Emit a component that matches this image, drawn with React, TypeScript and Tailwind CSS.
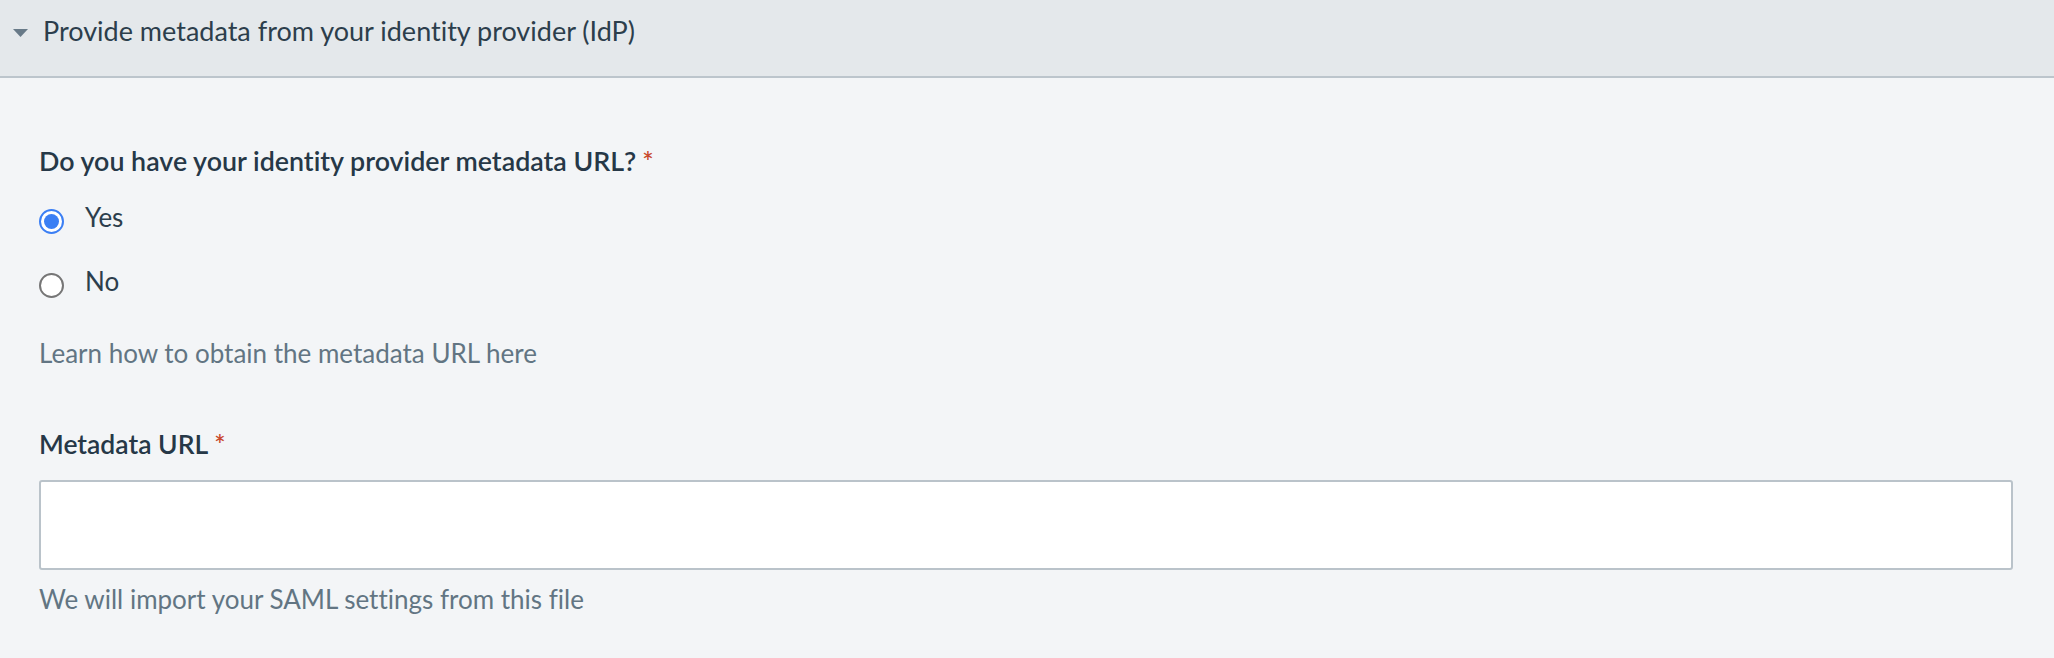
import { useState } from 'react';

const Required = () => <span className="ml-[6px] text-[#c9482c]">*</span>;

const Radio = ({ checked }: { checked: boolean }) =>
  checked ? (
    <span className="mt-[8px] flex h-[25px] w-[25px] shrink-0 items-center justify-center rounded-full border-[2.5px] border-[#3b7ff4] bg-white">
      <span className="h-[15px] w-[15px] rounded-full bg-[#3b7ff4]" />
    </span>
  ) : (
    <span className="mt-[8px] h-[25px] w-[25px] shrink-0 rounded-full border-2 border-[#767676] bg-white" />
  );

const App = () => {
  const [hasUrl, setHasUrl] = useState(true);
  const [url, setUrl] = useState('');

  return (
    <div className="min-h-[658px] w-full bg-[#f3f5f7] font-['Lato',sans-serif] [font-variant-ligatures:none]">
      {/* Collapsible section header */}
      <div className="h-[78px] border-b-2 border-[#bcc5cc] bg-[#e4e8eb] pt-[14px] pl-[13px]">
        <div className="flex h-[34px] items-center gap-[15px]">
          <svg width="15" height="8" viewBox="0 0 15 8" className="mt-[3px]">
            <path d="M0 0 L15 0 L7.5 8 Z" fill="#687a88" />
          </svg>
          <span className="text-[27px] leading-[34px] text-[#2c3e4c]">
            Provide metadata from your identity provider (IdP)
          </span>
        </div>
      </div>

      <div className="pt-[67px] pr-[41px] pl-[39px] text-[26px] leading-[32px]">
        <div className="text-[26.8px] font-semibold text-[#263847]">
          Do you have your identity provider metadata URL?
          <Required />
        </div>

        <div className="mt-[24px] flex flex-col gap-[31px]">
          {[
            { label: 'Yes', value: true },
            { label: 'No', value: false },
          ].map((opt) => (
            <label
              key={opt.label}
              className="flex cursor-pointer items-start gap-[21px] text-[#2c3e4c]"
              onClick={() => setHasUrl(opt.value)}
            >
              <Radio checked={hasUrl === opt.value} />
              <span>{opt.label}</span>
            </label>
          ))}
        </div>

        <div className="mt-[39px] text-[#627583]">Learn how to obtain the metadata URL here</div>

        <div className="mt-[59px] text-[26.5px] font-semibold text-[#263847]">
          Metadata URL
          <Required />
        </div>

        <input
          value={url}
          onChange={(e) => setUrl(e.target.value)}
          className="mt-[20px] block h-[90px] w-full rounded-[3px] border-2 border-[#bac3ca] bg-white px-4 text-[26px] text-[#2c3e4c] outline-none"
        />

        <div className="mt-[13px] text-[#627583]">We will import your SAML settings from this file</div>
      </div>
    </div>
  );
};

export default App;
